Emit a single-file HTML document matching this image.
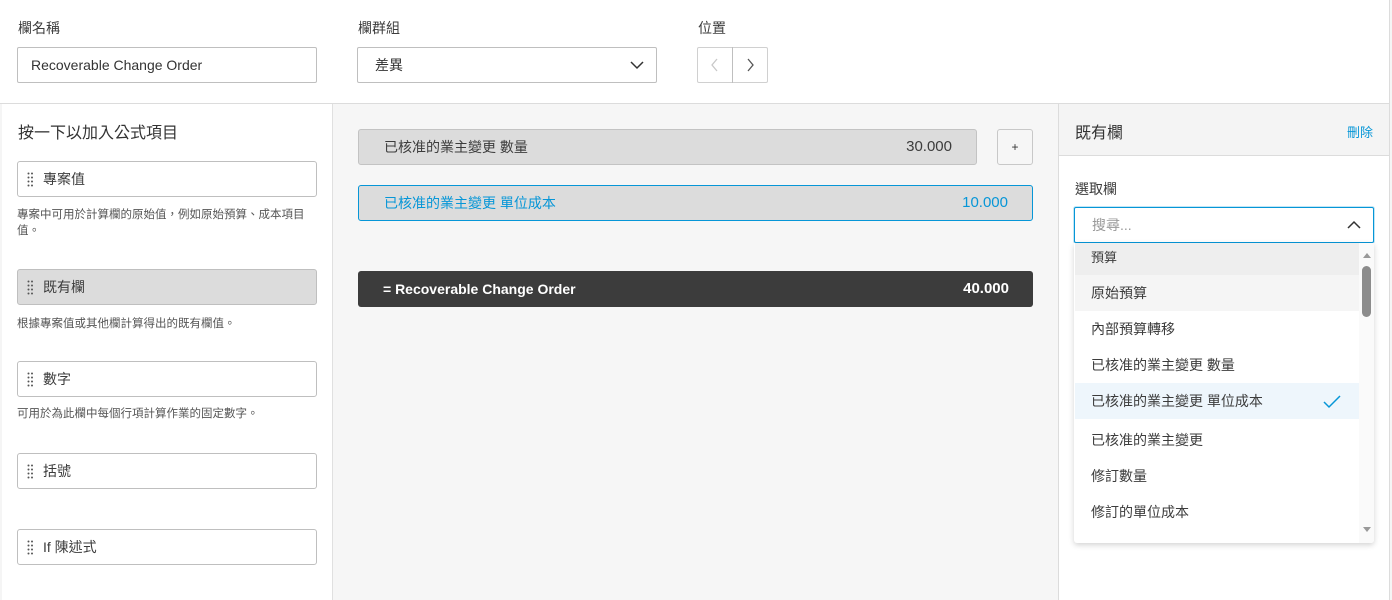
<!DOCTYPE html>
<html><head><meta charset="utf-8"><style>
*{box-sizing:border-box;margin:0;padding:0}
body{width:1392px;height:600px;overflow:hidden;background:#fff;font-family:"Liberation Sans","Noto Sans CJK TC",sans-serif;color:#3c3c3c;position:relative}
.a{position:absolute}
.lbl{font-size:14px;color:#3c3c3c}
.inp{border:1px solid #bfbfbf;border-radius:2px;background:#fff;font-size:14px}
.drag{position:absolute;left:9px;top:10px}
.item{position:absolute;left:17px;width:300px;height:36px;border:1px solid #bfbfbf;border-radius:3px;background:#fff;font-size:14px;line-height:34px;padding-left:25px;color:#3c3c3c}
.desc{position:absolute;left:17px;width:305px;font-size:11.5px;line-height:16px;color:#555}
.opt{position:absolute;left:1px;width:284px;height:36px;line-height:36px;padding-left:16px;font-size:14px;color:#3c3c3c}
</style></head><body>
<svg width="0" height="0" style="position:absolute"><defs><g id="dg" fill="#555"><circle cx="1.5" cy="1.5" r="1"/><circle cx="5" cy="1.5" r="1"/><circle cx="1.5" cy="5.5" r="1"/><circle cx="5" cy="5.5" r="1"/><circle cx="1.5" cy="9.5" r="1"/><circle cx="5" cy="9.5" r="1"/><circle cx="1.5" cy="13.5" r="1"/><circle cx="5" cy="13.5" r="1"/></g></defs></svg>
<!-- top -->
<div class="a lbl" style="left:18px;top:18px">欄名稱</div>
<div class="a inp" style="left:17px;top:47px;width:300px;height:36px;line-height:34px;padding-left:13px;color:#333">Recoverable Change Order</div>
<div class="a lbl" style="left:358px;top:18px">欄群組</div>
<div class="a inp" style="left:357px;top:47px;width:300px;height:36px;line-height:34px;padding-left:17px;color:#333">差異
<svg class="a" style="right:12px;top:12px" width="14" height="10" viewBox="0 0 14 10"><path d="M1 2 L7 8 L13 2" fill="none" stroke="#333" stroke-width="1.5"/></svg></div>
<div class="a lbl" style="left:698px;top:18px">位置</div>
<div class="a inp" style="left:697px;top:47px;width:71px;height:36px;border-color:#d0d0d0"></div>
<div class="a" style="left:732px;top:47px;width:1px;height:36px;background:#bfbfbf"></div>
<svg class="a" style="left:710px;top:58px" width="10" height="14" viewBox="0 0 10 14"><path d="M7 1 L2 7 L7 13" fill="none" stroke="#c8c8c8" stroke-width="1.3"/></svg>
<svg class="a" style="left:745px;top:58px" width="10" height="14" viewBox="0 0 10 14"><path d="M3 1 L8 7 L3 13" fill="none" stroke="#555" stroke-width="1.3"/></svg>
<div class="a" style="left:0;top:103px;width:1392px;height:1px;background:#dcdcdc"></div>
<!-- left panel -->
<div class="a" style="left:0;top:104px;width:2px;height:496px;background:#f5f5f5"></div>
<div class="a" style="left:332px;top:104px;width:1px;height:496px;background:#e0e0e0"></div>
<div class="a" style="left:18px;top:119px;font-size:16px;color:#333">按一下以加入公式項目</div>
<div class="item" style="top:161px"><svg class="drag" width="7" height="15"><use href="#dg"/></svg>專案值</div>
<div class="desc" style="top:207px">專案中可用於計算欄的原始值，例如原始預算、成本項目值。</div>
<div class="item" style="top:269px;background:#dcdcdc"><svg class="drag" width="7" height="15"><use href="#dg"/></svg>既有欄</div>
<div class="desc" style="top:316px">根據專案值或其他欄計算得出的既有欄值。</div>
<div class="item" style="top:361px"><svg class="drag" width="7" height="15"><use href="#dg"/></svg>數字</div>
<div class="desc" style="top:406px">可用於為此欄中每個行項計算作業的固定數字。</div>
<div class="item" style="top:453px"><svg class="drag" width="7" height="15"><use href="#dg"/></svg>括號</div>
<div class="item" style="top:529px"><svg class="drag" width="7" height="15"><use href="#dg"/></svg>If 陳述式</div>
<!-- middle -->
<div class="a" style="left:333px;top:104px;width:725px;height:496px;background:#f6f6f6"></div>
<div class="a" style="left:358px;top:129px;width:619px;height:36px;background:#dcdcdc;border:1px solid #c3c3c3;border-radius:3px;font-size:14px;line-height:34px;padding-left:25px;color:#3c3c3c">已核准的業主變更 數量<span class="a" style="right:24px;top:0;font-size:15px">30.000</span></div>
<div class="a" style="left:997px;top:129px;width:36px;height:36px;background:#f6f6f6;border:1px solid #c8c8c8;border-radius:3px;font-size:12px;line-height:34px;text-align:center;color:#333">+</div>
<div class="a" style="left:358px;top:185px;width:675px;height:36px;background:#dcdcdc;border:1px solid #0696d7;border-radius:3px;font-size:14px;line-height:34px;padding-left:25px;color:#0696d7">已核准的業主變更 單位成本<span class="a" style="right:24px;top:0;font-size:15px">10.000</span></div>
<div class="a" style="left:358px;top:271px;width:675px;height:36px;background:#3c3c3c;border-radius:3px;font-size:14px;font-weight:bold;line-height:36px;padding-left:25px;color:#fff">= Recoverable Change Order<span class="a" style="right:24px;top:0;font-size:15px">40.000</span></div>
<!-- right panel -->
<div class="a" style="left:1058px;top:104px;width:1px;height:496px;background:#dcdcdc"></div>
<div class="a" style="left:1389px;top:0;width:1px;height:600px;background:#dcdcdc"></div>
<div class="a" style="left:1390px;top:0;width:2px;height:600px;background:#f5f5f5"></div>
<div class="a" style="left:1059px;top:104px;width:330px;height:52px;background:#f4f4f4;border-bottom:1px solid #dcdcdc"></div>
<div class="a" style="left:1075px;top:119px;font-size:16px;color:#333">既有欄</div>
<div class="a" style="left:1347px;top:122px;font-size:13px;color:#0696d7">刪除</div>
<div class="a lbl" style="left:1075px;top:179px">選取欄</div>
<div class="a" style="left:1074px;top:207px;width:300px;height:36px;border:1px solid #0696d7;border-radius:2px;box-shadow:0 0 0 1px rgba(6,150,215,0.25);font-size:14px;line-height:34px;padding-left:17px;color:#999;background:#fff">搜尋...
<svg class="a" style="right:12px;top:12px" width="14" height="10" viewBox="0 0 14 10"><path d="M1 8 L7 2 L13 8" fill="none" stroke="#333" stroke-width="1.5"/></svg></div>
<div class="a" style="left:1074px;top:243px;width:300px;height:300px;background:#fff;border-radius:0 0 3px 3px;box-shadow:0 2px 6px rgba(0,0,0,0.18);overflow:hidden">
<div class="opt" style="top:0;height:32px;line-height:30px;background:#eeeeee;font-size:13px">預算</div>
<div class="opt" style="top:32px;background:#f5f5f5">原始預算</div>
<div class="opt" style="top:68px">內部預算轉移</div>
<div class="opt" style="top:104px">已核准的業主變更 數量</div>
<div class="opt" style="top:140px;background:#eef6fc">已核准的業主變更 單位成本
<svg class="a" style="left:248px;top:12px" width="18" height="14" viewBox="0 0 18 14"><path d="M1 7 L6 12 L17 1" fill="none" stroke="#0696d7" stroke-width="1.5"/></svg></div>
<div class="opt" style="top:179px">已核准的業主變更</div>
<div class="opt" style="top:215px">修訂數量</div>
<div class="opt" style="top:251px">修訂的單位成本</div>
<div class="a" style="left:285px;top:0;width:15px;height:300px;background:#fafafa"></div>
<svg class="a" style="left:288px;top:8px" width="10" height="8" viewBox="0 0 10 8"><path d="M1 7 L5 2 L9 7Z" fill="#999"/></svg>
<div class="a" style="left:288px;top:23px;width:9px;height:51px;border-radius:5px;background:#8c8c8c"></div>
<svg class="a" style="left:288px;top:283px" width="10" height="8" viewBox="0 0 10 8"><path d="M1 1 L5 6 L9 1Z" fill="#999"/></svg>
</div>
</body></html>
